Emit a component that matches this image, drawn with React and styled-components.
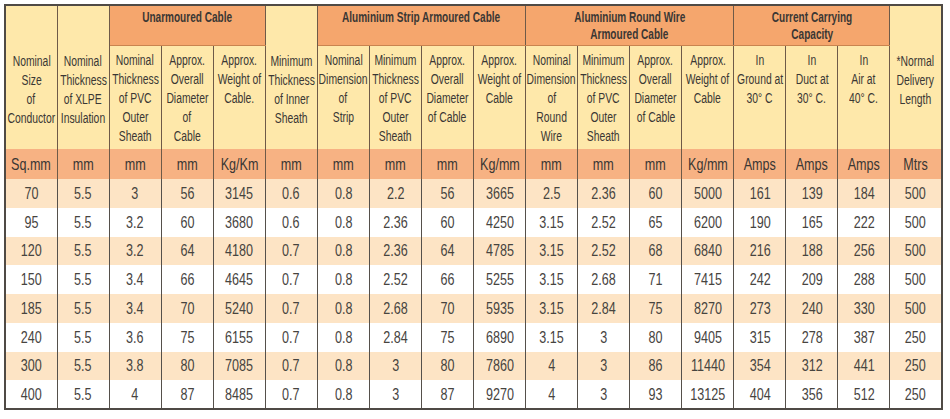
import React from "react";
import styled, { createGlobalStyle } from "styled-components";

const GlobalStyle = createGlobalStyle`
  html, body {
    margin: 0;
    padding: 0;
    background: #ffffff;
  }
  body {
    font-family: "Liberation Sans", Arial, sans-serif;
  }
`;

const groups = [
  { title: "Unarmoured Cable", span: 3 },
  { title: "Aluminium Strip Armoured Cable", span: 4 },
  { title: ["Aluminium Round Wire", "Armoured Cable"], span: 4 },
  { title: ["Current Carrying", "Capacity"], span: 3 },
];

const subHeads = [
  ["Nominal", "Thickness", "of PVC", "Outer", "Sheath"],
  ["Approx.", "Overall", "Diameter", "of", "Cable"],
  ["Approx.", "Weight of", "Cable."],
  ["Nominal", "Dimension", "of", "Strip"],
  ["Minimum", "Thickness", "of PVC", "Outer", "Sheath"],
  ["Approx.", "Overall", "Diameter", "of Cable"],
  ["Approx.", "Weight of", "Cable"],
  ["Nominal", "Dimension", "of", "Round", "Wire"],
  ["Minimum", "Thickness", "of PVC", "Outer", "Sheath"],
  ["Approx.", "Overall", "Diameter", "of Cable"],
  ["Approx.", "Weight of", "Cable"],
  ["In", "Ground at", "30° C"],
  ["In", "Duct at", "30° C."],
  ["In", "Air at", "40° C."],
];

const units = [
  "Sq.mm", "mm", "mm", "mm", "Kg/Km", "mm", "mm", "mm", "mm", "Kg/mm",
  "mm", "mm", "mm", "Kg/mm", "Amps", "Amps", "Amps", "Mtrs",
];

const rows = [
  ["70", "5.5", "3", "56", "3145", "0.6", "0.8", "2.2", "56", "3665", "2.5", "2.36", "60", "5000", "161", "139", "184", "500"],
  ["95", "5.5", "3.2", "60", "3680", "0.6", "0.8", "2.36", "60", "4250", "3.15", "2.52", "65", "6200", "190", "165", "222", "500"],
  ["120", "5.5", "3.2", "64", "4180", "0.7", "0.8", "2.36", "64", "4785", "3.15", "2.52", "68", "6840", "216", "188", "256", "500"],
  ["150", "5.5", "3.4", "66", "4645", "0.7", "0.8", "2.52", "66", "5255", "3.15", "2.68", "71", "7415", "242", "209", "288", "500"],
  ["185", "5.5", "3.4", "70", "5240", "0.7", "0.8", "2.68", "70", "5935", "3.15", "2.84", "75", "8270", "273", "240", "330", "500"],
  ["240", "5.5", "3.6", "75", "6155", "0.7", "0.8", "2.84", "75", "6890", "3.15", "3", "80", "9405", "315", "278", "387", "250"],
  ["300", "5.5", "3.8", "80", "7085", "0.7", "0.8", "3", "80", "7860", "4", "3", "86", "11440", "354", "312", "441", "250"],
  ["400", "5.5", "4", "87", "8485", "0.7", "0.8", "3", "87", "9270", "4", "3", "93", "13125", "404", "356", "512", "250"],
];

const Page = styled.div`
  padding: 4px 0 0 4px;
`;

const Table = styled.table`
  width: 939px;
  table-layout: fixed;
  border-collapse: collapse;
  border: 2px solid #4f4a45;
  color: #3a3734;
`;

const Col = styled.col`
  width: 52px;
`;

const Row = styled.tr`
  height: ${(p) => p.$h}px;
  background: ${(p) => p.$bg || "transparent"};
`;

const GroupTh = styled.th`
  padding: 3px 0 0;
  vertical-align: top;
  background: #f5a66d;
  border-left: 1px solid #6e5a48;
  border-right: 1px solid #6e5a48;
  border-bottom: 1px solid #c9844f;
  font-size: 15px;
  line-height: 16.5px;
  font-weight: 700;
`;

const SubTh = styled.th`
  padding: ${(p) => (p.$tall ? "45.5px" : "5.5px")} 0 0;
  vertical-align: top;
  background: #fee8aa;
  border-left: 1px solid #6e5a48;
  border-right: 1px solid #6e5a48;
  font-size: 14px;
  line-height: 19px;
  font-weight: 400;
`;

const UnitTd = styled.td`
  padding: 1px 0 0;
  background: #f7b283;
  border-left: 1px solid #6e5a48;
  border-right: 1px solid #6e5a48;
  font-size: 17px;
  vertical-align: middle;
`;

const Td = styled.td`
  padding: 1px 0 0;
  border-left: 1px solid #55504b;
  border-right: 1px solid #55504b;
  font-size: 17px;
  color: #47443f;
  vertical-align: middle;
`;

const Stack = styled.div`
  display: flex;
  flex-direction: column;
  align-items: center;
`;

/* the print face is a condensed grotesque, so squeeze the sans sideways */
const Line = styled.span`
  display: block;
  white-space: nowrap;
  transform: scaleX(${(p) => p.$squeeze || 0.74});
`;

function Lines({ text, squeeze }) {
  const list = Array.isArray(text) ? text : [text];
  return (
    <Stack>
      {list.map((t, i) => (
        <Line key={i} $squeeze={squeeze}>
          {t}
        </Line>
      ))}
    </Stack>
  );
}

export default function App() {
  return (
    <Page>
      <GlobalStyle />
      <Table>
        <colgroup>
          {units.map((_, i) => (
            <Col key={i} />
          ))}
        </colgroup>
        <thead>
          <Row $h={40}>
            <SubTh rowSpan={2} $tall>
              <Lines text={["Nominal", "Size", "of", "Conductor"]} />
            </SubTh>
            <SubTh rowSpan={2} $tall>
              <Lines text={["Nominal", "Thickness", "of XLPE", "Insulation"]} />
            </SubTh>
            <GroupTh colSpan={groups[0].span}>
              <Lines text={groups[0].title} squeeze={0.67} />
            </GroupTh>
            <SubTh rowSpan={2} $tall>
              <Lines text={["Minimum", "Thickness", "of Inner", "Sheath"]} />
            </SubTh>
            {groups.slice(1).map((g, i) => (
              <GroupTh key={i} colSpan={g.span}>
                <Lines text={g.title} squeeze={0.67} />
              </GroupTh>
            ))}
            <SubTh rowSpan={2} $tall>
              <Lines text={["*Normal", "Delivery", "Length"]} />
            </SubTh>
          </Row>
          <Row $h={104}>
            {subHeads.map((h, i) => (
              <SubTh key={i}>
                <Lines text={h} />
              </SubTh>
            ))}
          </Row>
          <Row $h={30}>
            {units.map((u, i) => (
              <UnitTd key={i}>
                <Lines text={u} />
              </UnitTd>
            ))}
          </Row>
        </thead>
        <tbody>
          {rows.map((r, ri) => (
            <Row key={ri} $h={28.75} $bg={ri % 2 === 0 ? "#fde4c5" : "#ffffff"}>
              {r.map((v, ci) => (
                <Td key={ci}>
                  <Lines text={v} squeeze={0.74} />
                </Td>
              ))}
            </Row>
          ))}
        </tbody>
      </Table>
    </Page>
  );
}
